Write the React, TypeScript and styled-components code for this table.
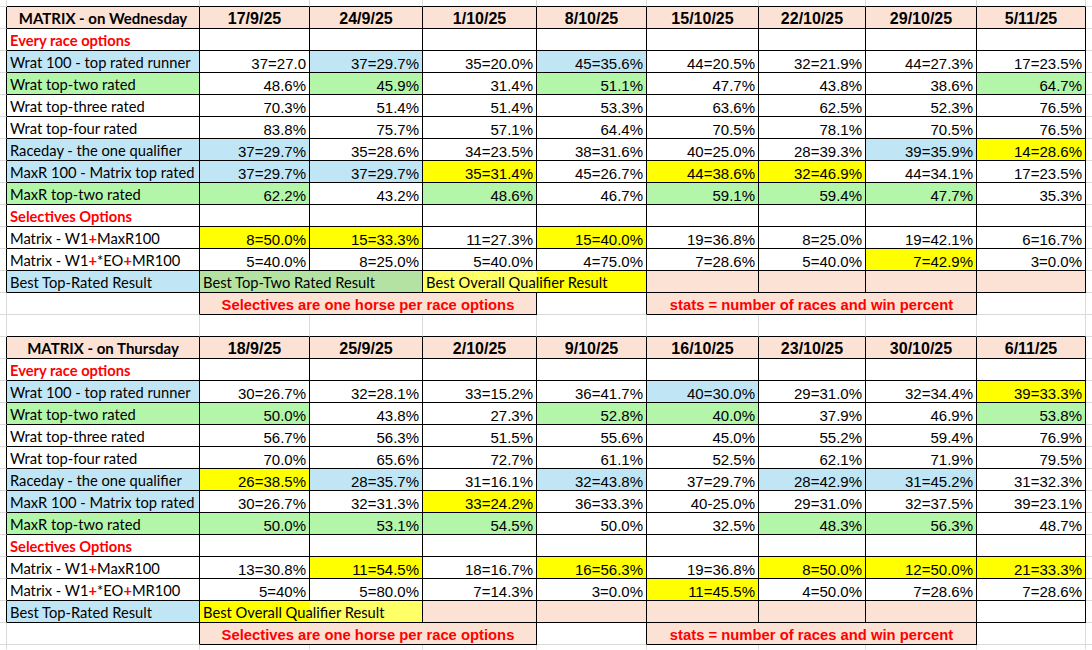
import React from 'react';
import styled, { createGlobalStyle } from 'styled-components';

const GRID = '#dadada';
const BLACK = '#000000';
const PEACH = '#fbe2d5';
const BLUE = '#c0e6f5';
const GREEN = '#b3f6aa';
const LEGEND_GREEN = '#b4e2a2';
const YELLOW = '#ffff00';
const PALE_YELLOW = '#ffff66';
const RED = '#ff0000';

const LABEL_FONT = `Lato, "Open Sans", "Liberation Sans", sans-serif`;
const NUM_FONT = `"Liberation Sans", Arial, sans-serif`;

const Global = createGlobalStyle`
  html, body { margin: 0; padding: 0; background: #ffffff; }
  body { width: 1092px; height: 650px; overflow: hidden; }
  * { box-sizing: border-box; }
`;

const Sheet = styled.div`
  display: grid;
  grid-template-columns: 7px 193px 110px 113px 114px 110px 112px 107px 111px 109px 6px;
  grid-template-rows: 7px repeat(14, 22px) 22px repeat(14, 22px) 5px;
  width: 1092px;
  height: 650px;
  background: #ffffff;
  overflow: hidden;
  color: #000000;
`;

type Align = 'left' | 'center' | 'right';

const Cell = styled.div<{ $bg?: string; $span: number; $right: string; $bottom: string; $align: Align }>`
  grid-column: span ${(p) => p.$span};
  background: ${(p) => p.$bg ?? '#ffffff'};
  border-right: 1px solid ${(p) => p.$right};
  border-bottom: 1px solid ${(p) => p.$bottom};
  display: flex;
  align-items: flex-end;
  justify-content: ${(p) => (p.$align === 'left' ? 'flex-start' : p.$align === 'center' ? 'center' : 'flex-end')};
  padding: 0 3px;
  white-space: nowrap;
  overflow: hidden;
  min-width: 0;
`;

const ValueText = styled.span`
  font-family: ${NUM_FONT};
  font-size: 15px;
  line-height: 17px;
`;

const LabelText = styled.span`
  font-family: ${LABEL_FONT};
  font-size: 14.7px;
  line-height: 19px;
`;

const SectionText = styled(LabelText)`
  font-weight: 700;
  color: ${RED};
`;

const TitleText = styled(LabelText)`
  font-weight: 700;
  font-size: 15px;
`;

const DateText = styled.span`
  font-family: ${NUM_FONT};
  font-weight: 700;
  font-size: 16px;
  line-height: 18px;
`;

const NoteText = styled.span`
  font-family: ${NUM_FONT};
  font-weight: 700;
  font-size: 14.8px;
  line-height: 17px;
  color: ${RED};
`;

const Plus = styled.span`
  color: ${RED};
  font-weight: 700;
`;

type Kind = 'blank' | 'title' | 'date' | 'label' | 'section' | 'value' | 'legend' | 'note';

interface Spec {
  kind: Kind;
  text?: string;
  bg?: string;
  boxed?: boolean;
  span?: number;
}

const blank = (boxed = false, bg?: string): Spec => ({ kind: 'blank', boxed, bg });

const colourOf: Record<string, string> = { b: BLUE, g: GREEN, y: YELLOW };

const val = (s: string): Spec => {
  const m = s.match(/^([bgy]):(.*)$/);
  return m ? { kind: 'value', text: m[2], bg: colourOf[m[1]], boxed: true } : { kind: 'value', text: s, boxed: true };
};

interface DataRow {
  label: string;
  bg?: string;
  vals: string[];
}

interface TableDef {
  title: string;
  dates: string[];
  every: DataRow[];
  selective: DataRow[];
  legend: Spec[];
}

const section = (text: string): Spec[] => [
  { kind: 'section', text, boxed: true },
  ...Array.from({ length: 8 }, () => blank(true)),
];

const dataRow = (r: DataRow): Spec[] => [{ kind: 'label', text: r.label, bg: r.bg, boxed: true }, ...r.vals.map(val)];

const footer: Spec[] = [
  blank(false),
  { kind: 'note', text: 'Selectives are one horse per race options', bg: PEACH, boxed: true, span: 3 },
  blank(false),
  { kind: 'note', text: 'stats = number of races and win percent', bg: PEACH, boxed: true, span: 3 },
  blank(false),
];

const buildTable = (t: TableDef): Spec[][] => [
  [
    { kind: 'title', text: t.title, bg: PEACH, boxed: true },
    ...t.dates.map((d): Spec => ({ kind: 'date', text: d, bg: PEACH, boxed: true })),
  ],
  section('Every race options'),
  ...t.every.map(dataRow),
  section('Selectives Options'),
  ...t.selective.map(dataRow),
  t.legend,
  footer,
];

const wednesday: TableDef = {
  title: 'MATRIX - on Wednesday',
  dates: ['17/9/25', '24/9/25', '1/10/25', '8/10/25', '15/10/25', '22/10/25', '29/10/25', '5/11/25'],
  every: [
    { label: 'Wrat 100 - top rated runner', bg: BLUE, vals: ['37=27.0', 'b:37=29.7%', '35=20.0%', 'b:45=35.6%', '44=20.5%', '32=21.9%', '44=27.3%', '17=23.5%'] },
    { label: 'Wrat top-two rated', bg: GREEN, vals: ['48.6%', 'g:45.9%', '31.4%', 'g:51.1%', '47.7%', '43.8%', '38.6%', 'g:64.7%'] },
    { label: 'Wrat top-three rated', vals: ['70.3%', '51.4%', '51.4%', '53.3%', '63.6%', '62.5%', '52.3%', '76.5%'] },
    { label: 'Wrat top-four rated', vals: ['83.8%', '75.7%', '57.1%', '64.4%', '70.5%', '78.1%', '70.5%', '76.5%'] },
    { label: 'Raceday - the one qualifier', bg: BLUE, vals: ['b:37=29.7%', '35=28.6%', '34=23.5%', '38=31.6%', '40=25.0%', '28=39.3%', 'b:39=35.9%', 'y:14=28.6%'] },
    { label: 'MaxR 100 - Matrix top rated', bg: BLUE, vals: ['b:37=29.7%', 'b:37=29.7%', 'y:35=31.4%', '45=26.7%', 'y:44=38.6%', 'y:32=46.9%', '44=34.1%', '17=23.5%'] },
    { label: 'MaxR top-two rated', bg: GREEN, vals: ['g:62.2%', '43.2%', 'g:48.6%', '46.7%', 'g:59.1%', 'g:59.4%', 'g:47.7%', '35.3%'] },
  ],
  selective: [
    { label: 'Matrix - W1+MaxR100', vals: ['y:8=50.0%', 'y:15=33.3%', '11=27.3%', 'y:15=40.0%', '19=36.8%', '8=25.0%', '19=42.1%', '6=16.7%'] },
    { label: 'Matrix - W1+*EO+MR100', vals: ['5=40.0%', '8=25.0%', '5=40.0%', '4=75.0%', '7=28.6%', '5=40.0%', 'y:7=42.9%', '3=0.0%'] },
  ],
  legend: [
    { kind: 'legend', text: 'Best Top-Rated Result', bg: BLUE, boxed: true },
    { kind: 'legend', text: 'Best Top-Two Rated Result', bg: LEGEND_GREEN, boxed: true, span: 2 },
    {
      kind: 'legend',
      text: 'Best Overall Qualifier Result',
      bg: `linear-gradient(to right, ${PALE_YELLOW} 0 114px, ${YELLOW} 114px)`,
      boxed: true,
      span: 2,
    },
    blank(true, PEACH),
    blank(true, PEACH),
    blank(true, PEACH),
    blank(true, PEACH),
  ],
};

const thursday: TableDef = {
  title: 'MATRIX - on Thursday',
  dates: ['18/9/25', '25/9/25', '2/10/25', '9/10/25', '16/10/25', '23/10/25', '30/10/25', '6/11/25'],
  every: [
    { label: 'Wrat 100 - top rated runner', bg: BLUE, vals: ['30=26.7%', '32=28.1%', '33=15.2%', '36=41.7%', 'b:40=30.0%', '29=31.0%', '32=34.4%', 'y:39=33.3%'] },
    { label: 'Wrat top-two rated', bg: GREEN, vals: ['g:50.0%', '43.8%', '27.3%', 'g:52.8%', 'g:40.0%', '37.9%', '46.9%', 'g:53.8%'] },
    { label: 'Wrat top-three rated', vals: ['56.7%', '56.3%', '51.5%', '55.6%', '45.0%', '55.2%', '59.4%', '76.9%'] },
    { label: 'Wrat top-four rated', vals: ['70.0%', '65.6%', '72.7%', '61.1%', '52.5%', '62.1%', '71.9%', '79.5%'] },
    { label: 'Raceday - the one qualifier', bg: BLUE, vals: ['y:26=38.5%', 'b:28=35.7%', '31=16.1%', 'b:32=43.8%', '37=29.7%', 'b:28=42.9%', 'b:31=45.2%', '31=32.3%'] },
    { label: 'MaxR 100 - Matrix top rated', bg: BLUE, vals: ['30=26.7%', '32=31.3%', 'y:33=24.2%', '36=33.3%', '40-25.0%', '29=31.0%', '32=37.5%', '39=23.1%'] },
    { label: 'MaxR top-two rated', bg: GREEN, vals: ['g:50.0%', 'g:53.1%', 'g:54.5%', '50.0%', '32.5%', 'g:48.3%', 'g:56.3%', '48.7%'] },
  ],
  selective: [
    { label: 'Matrix - W1+MaxR100', vals: ['13=30.8%', 'y:11=54.5%', '18=16.7%', 'y:16=56.3%', '19=36.8%', 'y:8=50.0%', 'y:12=50.0%', 'y:21=33.3%'] },
    { label: 'Matrix - W1+*EO+MR100', vals: ['5=40%', '5=80.0%', '7=14.3%', '3=0.0%', 'y:11=45.5%', '4=50.0%', '7=28.6%', '7=28.6%'] },
  ],
  legend: [
    { kind: 'legend', text: 'Best Top-Rated Result', bg: BLUE, boxed: true },
    {
      kind: 'legend',
      text: 'Best Overall Qualifier Result',
      bg: `linear-gradient(to right, ${YELLOW} 0 110px, ${PALE_YELLOW} 110px)`,
      boxed: true,
      span: 2,
    },
    blank(true, PEACH),
    blank(true, PEACH),
    blank(true, PEACH),
    blank(true, PEACH),
    blank(true, PEACH),
    blank(true),
  ],
};

const COLS = 11;
const stubRow = (): Spec[] => Array.from({ length: COLS }, () => blank(false));
const wrap = (r: Spec[]): Spec[] => [blank(false), ...r, blank(false)];

const sheetRows: Spec[][] = [
  stubRow(),
  ...buildTable(wednesday).map(wrap),
  stubRow(),
  ...buildTable(thursday).map(wrap),
  stubRow(),
];

const withPlus = (text: string) =>
  text.split('+').map((part, i) => (
    <React.Fragment key={i}>
      {i > 0 && <Plus>+</Plus>}
      {part}
    </React.Fragment>
  ));

const alignOf = (k: Kind): Align =>
  k === 'value' ? 'right' : k === 'title' || k === 'date' || k === 'note' ? 'center' : 'left';

const content = (c: Spec) => {
  switch (c.kind) {
    case 'title':
      return <TitleText>{c.text}</TitleText>;
    case 'date':
      return <DateText>{c.text}</DateText>;
    case 'section':
      return <SectionText>{c.text}</SectionText>;
    case 'label':
    case 'legend':
      return <LabelText>{withPlus(c.text ?? '')}</LabelText>;
    case 'value':
      return <ValueText>{c.text}</ValueText>;
    case 'note':
      return <NoteText>{c.text}</NoteText>;
    default:
      return null;
  }
};

export default function App() {
  const occ = sheetRows.map((row) => {
    const arr: Spec[] = [];
    row.forEach((c) => {
      for (let i = 0; i < (c.span ?? 1); i++) arr.push(c);
    });
    return arr;
  });

  return (
    <>
      <Global />
      <Sheet>
        {sheetRows.map((row, ri) => {
          let col = 0;
          return row.map((c, ci) => {
            const span = c.span ?? 1;
            const start = col;
            col += span;
            const rightN = occ[ri][start + span];
            const right =
              start + span >= COLS ? 'transparent' : c.boxed || rightN?.boxed ? BLACK : GRID;
            let bottom = ri === sheetRows.length - 1 ? 'transparent' : GRID;
            if (c.boxed) bottom = BLACK;
            else if (ri + 1 < sheetRows.length) {
              for (let k = start; k < start + span; k++) if (occ[ri + 1][k]?.boxed) bottom = BLACK;
            }
            return (
              <Cell
                key={`${ri}-${ci}`}
                $span={span}
                $bg={c.bg}
                $right={right}
                $bottom={bottom}
                $align={alignOf(c.kind)}
              >
                {content(c)}
              </Cell>
            );
          });
        })}
      </Sheet>
    </>
  );
}
